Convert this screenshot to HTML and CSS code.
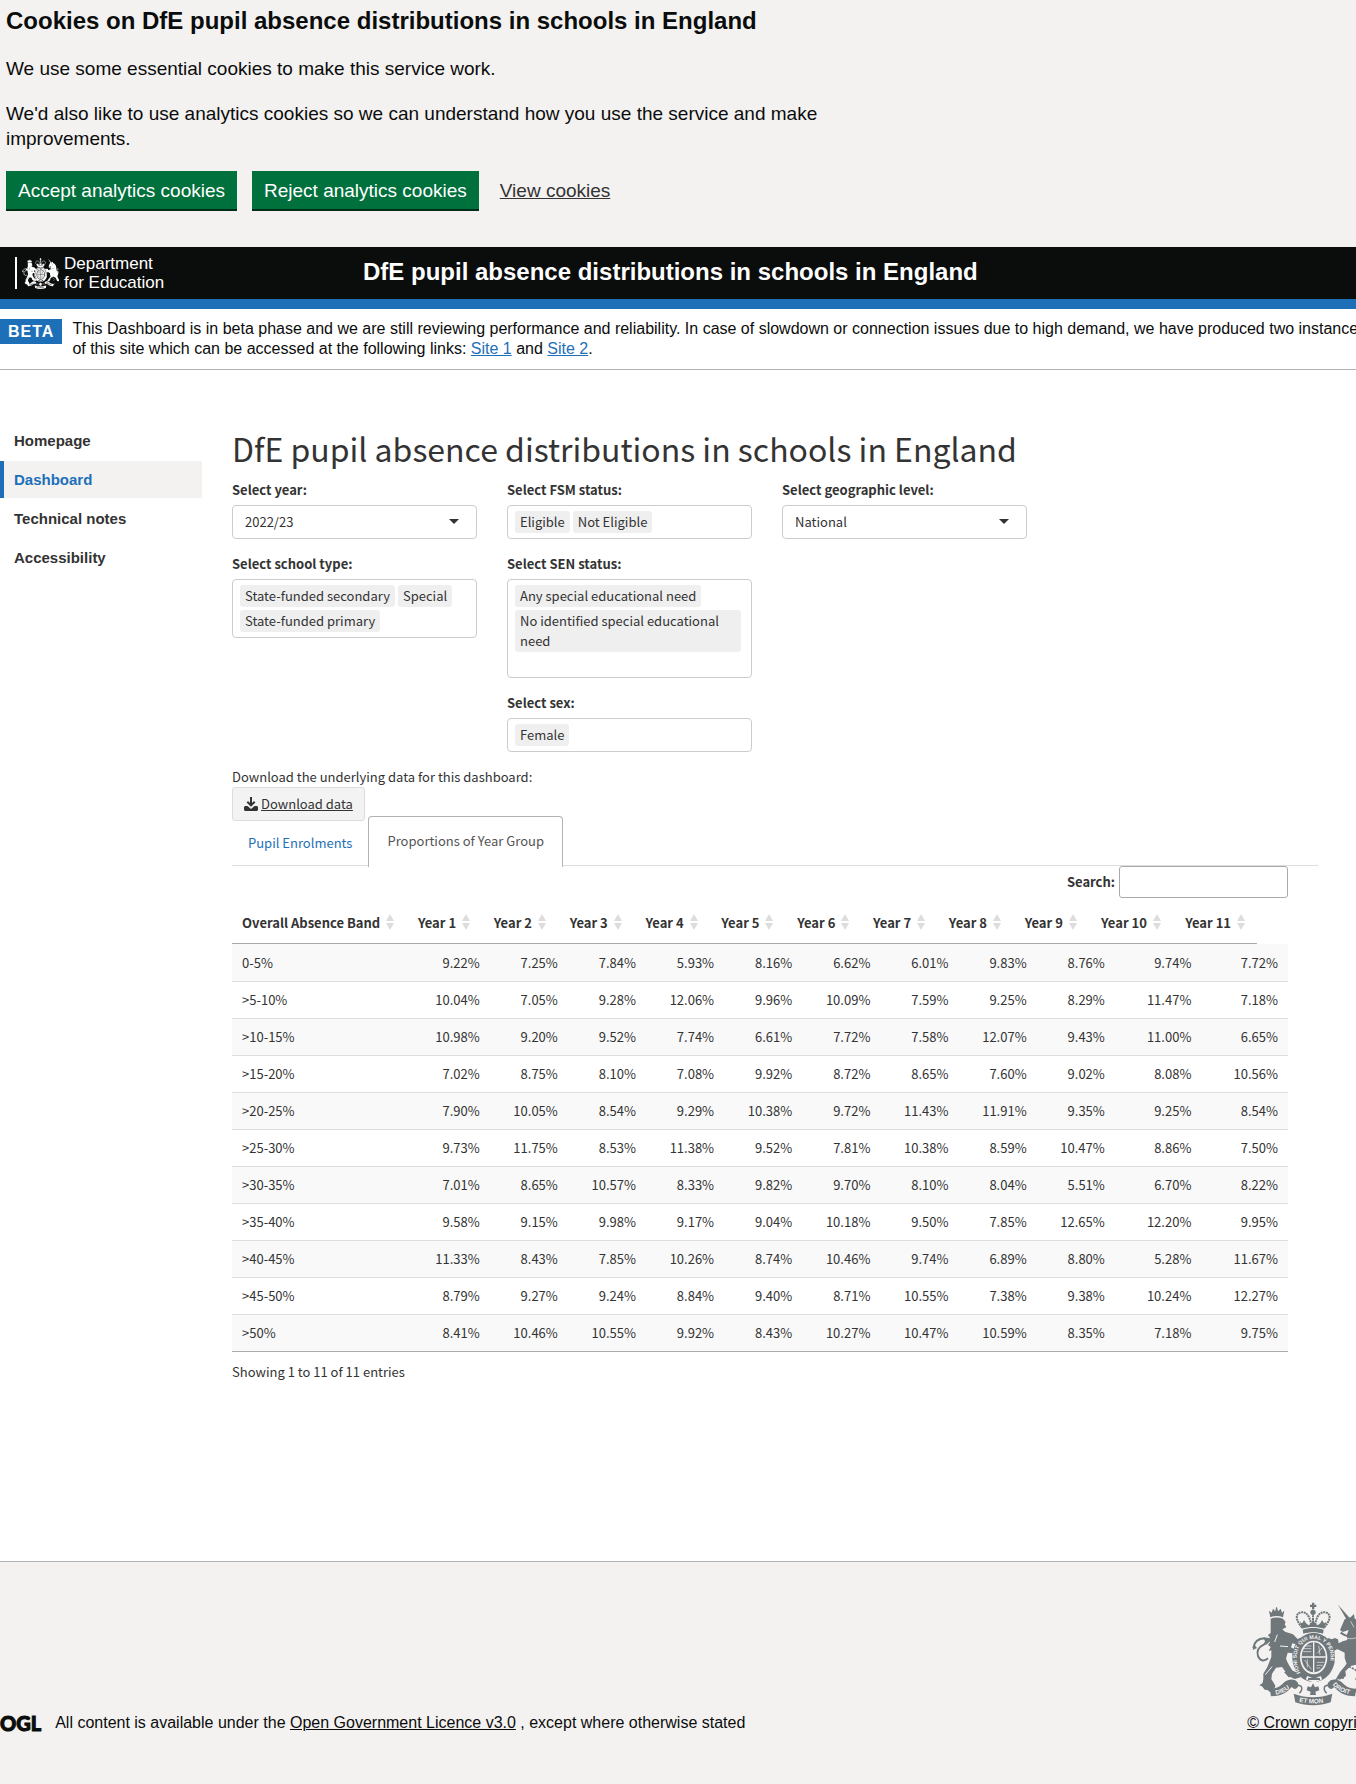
FILE: index.html
```html
<!DOCTYPE html>
<html lang="en">
<head>
<meta charset="utf-8">
<meta name="viewport" content="width=device-width, initial-scale=1">
<title>DfE pupil absence distributions in schools in England</title>
<link rel="stylesheet" href="styles.css">
</head>
<body>
<svg class="sprite" aria-hidden="true">
  <defs>
    <symbol id="crest" viewBox="60 34 370 312">
      <!-- lion and its crown -->
      <path d="M117 80l-4-20 8 6 4-12 7 8 2-12 3 0 3 12 8-8 4 12 7-6-4 20c-12-5-26-5-38 0z"/>
      <path d="M118 84c12-5 26-4 37 0l8 10-3 7 5 9-12 6 8 7 24 8 14 14 8-4 4 9-12 12-16-4-4 12 14 8-2 10-22-2-5 18c4 12 12 24 20 36l18 8 6 12-18 5-18-8-20-28-18 2-12 18-2 16 12 20-4 14-28-2-8-10 4-22 0-16 12-20 12-30 0-20-8 2 6-12-8-6 6-8-8-6 8-8-6-8 8-6z"/>
      <path d="M66 172c2-16 12-28 34-29M100 146c18-2 10 12-3 16-14 7-22 19-17 34 6 17 20 16 30 7" fill="none" stroke="currentColor" stroke-width="6"/>
      <path d="M64 178l4-18 9 12zM96 140l18 2-2 14-16 6 5-10z"/>
      <path d="M146 166l24 2M102 252l20-24M138 132l-8 22" fill="none" class="crest-gap" stroke-width="3"/>
      <path d="M84 284l20-14 22 6 6 12-22 6zM158 244l28-2 10 14-24 4z"/>
      <!-- unicorn -->
      <path d="M320 42l38 43-10 6z"/>
      <path d="M340 86l18-6 10-10 2 14 16 8 12 18 6 26-4 20 16 14 6 24-8 22 6 20 14 24-6 8-18-2-4-14-10-20-20-10-18 4-16 16 2 14-16 10-14-2 12-20 20-24-6-18 0-16-24-12-10 6-14-10 4-14-10-8 4-6 12 4 8-4 10 4 2 12 12-6 14-4-2-14 6-16-18 6-8-6z"/>
      <path d="M328 126c18 14 40 16 58 4M302 180l22-12M424 150c-16-14-24 4-12 12 14 10 12 22 2 32" fill="none" stroke="currentColor" stroke-width="7"/>
      <path d="M326 134c18 12 42 14 58 2M358 92l10 18" fill="none" class="crest-gap" stroke-width="2"/>
      <path d="M344 222c16 12 30 12 42 30l-14 14M338 262c-14-2-18 6-28 6" fill="none" stroke="currentColor" stroke-width="5" stroke-dasharray="7 3"/>
      <!-- royal crown -->
      <path d="M242 36h7v6h6v7h-6v7h-7v-7h-6v-7h6z"/>
      <circle cx="245" cy="65" r="8"/>
      <path d="M212 110c-14-15-24-38-6-44 16-5 30 6 34 40M279 110c14-15 24-38 6-44-16-5-30 6-34 40M245 74v26" fill="none" stroke="currentColor" stroke-width="6" stroke-dasharray="6 2"/>
      <path d="M206 94l7 4 5-10 6 10 8 6 8-6 5-12 6 12 8 6 8-6 5-10 6 10 7-4-6 20c-22-7-46-7-68 0z"/>
      <path d="M214 117c20-7 43-7 63 0l-2 12c-18-6-40-6-59 0z"/>
      <!-- garter and shield -->
      <path fill-rule="evenodd" d="M247 127c36 0 64 32 64 73s-28 74-64 74-64-33-64-74 28-73 64-73zm0 23c-24 0-41 22-41 50s17 51 41 51 41-23 41-51-17-50-41-50z"/>
      <ellipse cx="247" cy="200" rx="36" ry="45"/>
      <path d="M247 155v90M211 199h72" fill="none" class="crest-gap" stroke-width="4"/>
      <path d="M218 174h22M216 183h24M222 166h18M256 215h22M256 224h18M255 232h12M262 165l4 28M272 172l-14 16M220 208l20 28M228 206v24" fill="none" class="crest-gap" stroke-width="2"/>
      <path id="motto-ring" d="M208 246c-26-42-10-101 39-101s65 59 39 101" fill="none"/>
      <text class="crest-motto ring"><textPath href="#motto-ring">HONI SOIT QUI MAL Y PENSE</textPath></text>
      <path d="M228 256l20 8 20-8 5 10-25 10-25-10z" class="crest-hole"/>
      <path d="M230 262h36v6h-36z"/>
      <!-- scroll -->
      <path d="M100 291c26 8 44-2 54-12 14-14 34-16 43-6 10 10 2 22-8 22l-8-6c-10 12-28 28-62 28l-2-12z"/>
      <path d="M390 291c-26 8-44-2-54-12-14-14-34-16-43-6-10 10-2 22 8 22l8-6c10 12 28 28 62 28l2-12z"/>
      <path d="M187 309c38 14 78 14 116 0l-5 26c-34 12-72 12-106 0z"/>
      <path d="M196 284c18-2 20 12 8 24M294 284c-18-2-20 12-8 24" fill="none" stroke="currentColor" stroke-width="4"/>
      <path d="M245 278l6 12 10-3 3 12-12 4 2 10h-18l2-10-12-4 3-12 10 3z"/>
      <path id="scroll-left" d="M134 312c22-4 42-16 52-30" fill="none"/>
      <path id="scroll-mid" d="M203 333c28 7 56 7 86 0" fill="none"/>
      <path id="scroll-right" d="M304 282c12 16 34 27 58 30" fill="none"/>
      <text class="crest-motto"><textPath href="#scroll-left">DIEU</textPath></text>
      <text class="crest-motto"><textPath href="#scroll-mid">ET MON</textPath></text>
      <text class="crest-motto"><textPath href="#scroll-right">DROIT</textPath></text>
    </symbol>
  </defs>
</svg>

<section class="cookies" aria-label="Cookies">
  <h2>Cookies on DfE pupil absence distributions in schools in England</h2>
  <p>We use some essential cookies to make this service work.</p>
  <p>We'd also like to use analytics cookies so we can understand how you use the service and make improvements.</p>
  <div class="cookie-actions">
    <button type="button" class="btn-green">Accept analytics cookies</button>
    <button type="button" class="btn-green">Reject analytics cookies</button>
    <a href="#cookies">View cookies</a>
  </div>
</section>

<header class="site-header">
  <a class="dfe-logo" href="#home">
    <svg class="dfe-crest" aria-hidden="true"><use href="#crest"/></svg>
    <span>Department<br>for Education</span>
  </a>
  <div class="site-title">DfE pupil absence distributions in schools in England</div>
</header>

<div class="phase-clip">
  <div class="phase">
    <strong class="tag">BETA</strong>
    <p>This Dashboard is in beta phase and we are still reviewing performance and reliability. In case of slowdown or connection issues due to high demand, we have produced two instances of this site which can be accessed at the following links: <a href="#site1">Site 1</a> and <a href="#site2">Site 2</a>.</p>
  </div>
</div>

<div class="layout">
  <nav class="sidebar" aria-label="Sections">
    <a href="#homepage">Homepage</a>
    <a href="#dashboard" class="current" aria-current="page">Dashboard</a>
    <a href="#notes">Technical notes</a>
    <a href="#accessibility">Accessibility</a>
  </nav>

  <main>
    <h1>DfE pupil absence distributions in schools in England</h1>
    <div class="filters">
      <div class="filter-col">
        <div class="field">
          <label for="year">Select year:</label>
          <div class="select"><select id="year"><option>2022/23</option></select></div>
        </div>
        <div class="field">
          <label for="school">Select school type:</label>
          <div class="multi"><span>State-funded secondary</span><span>Special</span><span>State-funded primary</span><input id="school" type="text"></div>
        </div>
      </div>
      <div class="filter-col">
        <div class="field">
          <label for="fsm">Select FSM status:</label>
          <div class="multi"><span>Eligible</span><span>Not Eligible</span><input id="fsm" type="text"></div>
        </div>
        <div class="field">
          <label for="sen">Select SEN status:</label>
          <div class="multi"><span>Any special educational need</span><span>No identified special educational need</span><input id="sen" type="text"></div>
        </div>
        <div class="field">
          <label for="sex">Select sex:</label>
          <div class="multi"><span>Female</span><input id="sex" type="text"></div>
        </div>
      </div>
      <div class="filter-col">
        <div class="field">
          <label for="geo">Select geographic level:</label>
          <div class="select"><select id="geo"><option>National</option></select></div>
        </div>
      </div>
    </div>

    <p class="note">Download the underlying data for this dashboard:</p>
    <a class="download" href="#download">
      <svg viewBox="0 0 14 14" aria-hidden="true"><path d="M6 0h2v6l2-2 1.400 1.400L7 9.800 2.600 5.400 4 4l2 2zM1 9h2.500L7 12l3.500-3H13l1 1v3l-1 1H1l-1-1v-3z"/></svg>
      Download data
    </a>

    <ul class="tabs">
      <li><a href="#enrolments">Pupil Enrolments</a></li>
      <li class="active"><a href="#proportions">Proportions of Year Group</a></li>
    </ul>

    <div class="data">
      <div class="search"><label for="search">Search:</label><input id="search" type="search"></div>
      <table class="head">
        <colgroup><col class="band"><col span="9" class="yr"><col span="2" class="yr-wide"></colgroup>
        <thead><tr>
          <th scope="col">Overall Absence Band</th><th scope="col">Year 1</th><th scope="col">Year 2</th><th scope="col">Year 3</th><th scope="col">Year 4</th><th scope="col">Year 5</th><th scope="col">Year 6</th><th scope="col">Year 7</th><th scope="col">Year 8</th><th scope="col">Year 9</th><th scope="col">Year 10</th><th scope="col">Year 11</th>
        </tr></thead>
      </table>
      <table class="body">
        <colgroup><col class="band"><col span="9" class="yr"><col span="2" class="yr-wide"></colgroup>
        <tbody>
          <tr><td>0-5%</td><td>9.22%</td><td>7.25%</td><td>7.84%</td><td>5.93%</td><td>8.16%</td><td>6.62%</td><td>6.01%</td><td>9.83%</td><td>8.76%</td><td>9.74%</td><td>7.72%</td></tr>
          <tr><td>&gt;5-10%</td><td>10.04%</td><td>7.05%</td><td>9.28%</td><td>12.06%</td><td>9.96%</td><td>10.09%</td><td>7.59%</td><td>9.25%</td><td>8.29%</td><td>11.47%</td><td>7.18%</td></tr>
          <tr><td>&gt;10-15%</td><td>10.98%</td><td>9.20%</td><td>9.52%</td><td>7.74%</td><td>6.61%</td><td>7.72%</td><td>7.58%</td><td>12.07%</td><td>9.43%</td><td>11.00%</td><td>6.65%</td></tr>
          <tr><td>&gt;15-20%</td><td>7.02%</td><td>8.75%</td><td>8.10%</td><td>7.08%</td><td>9.92%</td><td>8.72%</td><td>8.65%</td><td>7.60%</td><td>9.02%</td><td>8.08%</td><td>10.56%</td></tr>
          <tr><td>&gt;20-25%</td><td>7.90%</td><td>10.05%</td><td>8.54%</td><td>9.29%</td><td>10.38%</td><td>9.72%</td><td>11.43%</td><td>11.91%</td><td>9.35%</td><td>9.25%</td><td>8.54%</td></tr>
          <tr><td>&gt;25-30%</td><td>9.73%</td><td>11.75%</td><td>8.53%</td><td>11.38%</td><td>9.52%</td><td>7.81%</td><td>10.38%</td><td>8.59%</td><td>10.47%</td><td>8.86%</td><td>7.50%</td></tr>
          <tr><td>&gt;30-35%</td><td>7.01%</td><td>8.65%</td><td>10.57%</td><td>8.33%</td><td>9.82%</td><td>9.70%</td><td>8.10%</td><td>8.04%</td><td>5.51%</td><td>6.70%</td><td>8.22%</td></tr>
          <tr><td>&gt;35-40%</td><td>9.58%</td><td>9.15%</td><td>9.98%</td><td>9.17%</td><td>9.04%</td><td>10.18%</td><td>9.50%</td><td>7.85%</td><td>12.65%</td><td>12.20%</td><td>9.95%</td></tr>
          <tr><td>&gt;40-45%</td><td>11.33%</td><td>8.43%</td><td>7.85%</td><td>10.26%</td><td>8.74%</td><td>10.46%</td><td>9.74%</td><td>6.89%</td><td>8.80%</td><td>5.28%</td><td>11.67%</td></tr>
          <tr><td>&gt;45-50%</td><td>8.79%</td><td>9.27%</td><td>9.24%</td><td>8.84%</td><td>9.40%</td><td>8.71%</td><td>10.55%</td><td>7.38%</td><td>9.38%</td><td>10.24%</td><td>12.27%</td></tr>
          <tr><td>&gt;50%</td><td>8.41%</td><td>10.46%</td><td>10.55%</td><td>9.92%</td><td>8.43%</td><td>10.27%</td><td>10.47%</td><td>10.59%</td><td>8.35%</td><td>7.18%</td><td>9.75%</td></tr>
        </tbody>
      </table>
      <p class="info">Showing 1 to 11 of 11 entries</p>
    </div>
  </main>
</div>

<footer>
  <div class="footer-row">
    <div class="licence"><span class="ogl">OGL</span><p>All content is available under the <a href="#ogl">Open Government Licence v3.0</a> , except where otherwise stated</p></div>
    <a class="copyright" href="#crown"><svg class="royal-arms" aria-hidden="true"><use href="#crest"/></svg>© Crown copyright</a>
  </div>
</footer>
</body>
</html>
```
FILE: styles.css
```css
* { box-sizing: border-box; }

body {
  margin: 0;
  overflow-x: hidden;
  min-height: 100vh;
  display: flex;
  flex-direction: column;
  background: #fff;
  color: #333;
  font: 13px/20px "Noto Sans CJK SC", "Noto Sans", sans-serif;
}

h1, h2, p, ul { margin: 0; }
.sprite { position: absolute; width: 0; height: 0; }

.cookies {
  padding: 6px 6px 36px;
  background: #f3f2f1;
  color: #0b0c0c;
  font: 19px/25px "Liberation Sans", Arial, sans-serif;
}
.cookies h2 { font-size: 24px; line-height: 30px; margin-bottom: 20px; }
.cookies p { max-width: 840px; margin-bottom: 20px; }
.cookie-actions { display: flex; align-items: center; gap: 15px; }
.btn-green {
  height: 40px;
  padding: 0 12px;
  border: 0;
  border-bottom: 2px solid #002d18;
  background: #00703c;
  color: #fff;
  font: 19px/19px "Liberation Sans", Arial, sans-serif;
}
.cookie-actions a { margin-left: 6px; padding-bottom: 2px; color: #333; }

.site-header {
  display: grid;
  grid-template-columns: 363px 1fr;
  align-items: center;
  height: 62px;
  border-bottom: 10px solid #1d70b8;
  background: #0b0c0c;
  color: #fff;
  font-family: "Liberation Sans", Arial, sans-serif;
}
.dfe-logo {
  display: flex;
  align-items: center;
  gap: 5px;
  margin-left: 15px;
  padding-left: 5px;
  height: 32px;
  border-left: 2px solid #fff;
  color: #fff;
  font-size: 17px;
  line-height: 19px;
  text-decoration: none;
}
.dfe-crest { width: 37px; height: 33px; --hole: #0b0c0c; }
.dfe-crest, .royal-arms { flex: none; }
.site-title { padding-bottom: 2px; font-size: 24px; line-height: 30px; font-weight: bold; }

#crest { fill: currentColor; }
.crest-gap { stroke: var(--hole); }
.crest-hole { fill: var(--hole); }
.crest-motto { fill: var(--hole); font: bold 19px "Liberation Sans", Arial, sans-serif; }
.crest-motto.ring { font-size: 16px; }

.phase-clip { overflow: hidden; }
.phase {
  display: flex;
  align-items: flex-start;
  gap: 10px;
  margin-right: -15px;
  padding: 10px 0;
  border-bottom: 1px solid #b1b4b6;
  color: #0b0c0c;
  font: 16px/20px "Liberation Sans", Arial, sans-serif;
}
.tag {
  padding: 0 8px;
  background: #1d70b8;
  color: #fff;
  line-height: 25px;
  letter-spacing: 1px;
}
.phase a { color: #1d70b8; }

.layout {
  display: grid;
  grid-template-columns: 202px minmax(0, 1fr);
  gap: 30px;
  flex: 1;
  padding: 52px 38px 0 0;
}
.sidebar {
  display: flex;
  flex-direction: column;
  gap: 2px;
  font: bold 15px/37px "Liberation Sans", Arial, sans-serif;
}
.sidebar a {
  padding-left: 10px;
  border-left: 4px solid transparent;
  color: #333;
  text-decoration: none;
}
.sidebar .current { border-color: #1d70b8; background: #f3f2f1; color: #1d70b8; }

main { padding-top: 6px; }
h1 { font-size: 32px; line-height: 40px; font-weight: 400; margin-bottom: 12px; }

.filters {
  display: grid;
  grid-template-columns: repeat(4, minmax(0, 1fr));
  column-gap: 30px;
  padding-right: 16px;
}
.field { margin-bottom: 15px; }
.field label { display: block; margin-bottom: 5px; font-weight: bold; }
.select { position: relative; }
.select select {
  appearance: none;
  width: 100%;
  height: 34px;
  padding: 0 12px;
  border: 1px solid #ccc;
  border-radius: 4px;
  background: #fff;
  color: #333;
  font: inherit;
}
.select::after {
  content: "";
  position: absolute;
  top: 14px;
  right: 18px;
  border: 5px solid transparent;
  border-top-color: #333;
  border-bottom: 0;
}
.multi {
  display: flex;
  flex-wrap: wrap;
  gap: 3px;
  padding: 5px 7px;
  border: 1px solid #ccc;
  border-radius: 4px;
}
.multi span {
  max-width: calc(100% - 3px);
  padding: 1px 5px;
  border-radius: 3px;
  background: #efefef;
}
.multi input { width: 4px; height: 17px; padding: 0; border: 0; background: none; }

.download {
  display: inline-flex;
  align-items: center;
  gap: 3px;
  height: 34px;
  padding: 0 11px;
  border: 1px solid #ddd;
  border-radius: 3px;
  background: #f3f3f3;
  color: #333;
  vertical-align: top;
}
.download svg { width: 14px; height: 14px; fill: #333; }

.tabs {
  display: flex;
  height: 45px;
  padding: 0;
  border-bottom: 1px solid #ddd;
  list-style: none;
}
.tabs a { display: block; padding: 12px 16px; color: #1d70b8; text-decoration: none; }
.tabs .active {
  height: 51px;
  margin-top: -5px;
  border: 1px solid #b1b4b6;
  border-bottom: 0;
  border-radius: 4px 4px 0 0;
  background: #fff;
}
.tabs .active a { padding: 14px 18px; color: #555; }

.data { padding-right: 30px; }
.search { display: flex; justify-content: flex-end; align-items: center; gap: 4px; font-weight: bold; }
.search input { width: 169px; height: 32px; border: 1px solid #aaa; border-radius: 3px; background: #fff; }

table { width: 100%; table-layout: fixed; border-collapse: separate; border-spacing: 0; }
.head { width: calc(100% - 31px); }
.band { width: 17%; }
.yr { width: 7.4%; }
.yr-wide { width: 8.2%; }
th { height: 46px; padding: 5px 26px 0 10px; border-bottom: 1px solid #aaa; text-align: right; white-space: nowrap; position: relative; }
th:first-child { text-align: left; }
th::before, th::after {
  content: "";
  position: absolute;
  right: 12px;
  border: 4px solid transparent;
}
th::before { top: 16px; border-top: 0; border-bottom: 7px solid #ddd; }
th::after { top: 25px; border-bottom: 0; border-top: 7px solid #ddd; }
td { padding: 8px 10px; border-top: 1px solid #ddd; text-align: right; }
td:first-child { text-align: left; }
tr:first-child td { border-top-color: transparent; }
tr:nth-child(odd) td { background: #f9f9f9; }
.body { border-bottom: 1px solid #aaa; }
.info { padding-top: 10px; }

footer {
  overflow: hidden;
  padding: 40px 0 51px;
  border-top: 1px solid #b1b4b6;
  background: #f3f2f1;
  color: #0b0c0c;
  font: 16px/20px "Liberation Sans", Arial, sans-serif;
}
.footer-row { display: flex; justify-content: space-between; align-items: flex-end; margin-right: -23px; }
.footer-row a { color: #0b0c0c; }
.licence { display: flex; align-items: center; gap: 14px; }
.ogl { font: 900 20px/20px "Lato Black", Lato, sans-serif; -webkit-text-stroke: 1px #0b0c0c; }
.copyright { display: flex; flex-direction: column; align-items: center; gap: 7px; }
.royal-arms { width: 124px; height: 104px; color: #6f777b; --hole: #f3f2f1; }
```
